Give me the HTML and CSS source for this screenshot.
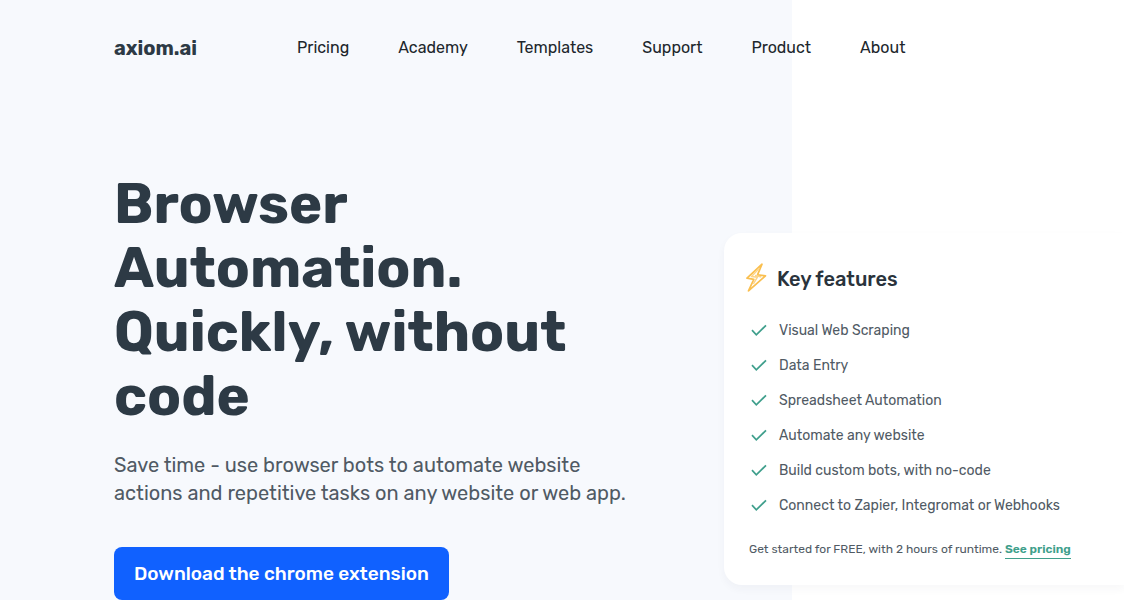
FILE: index.html
```html
<!DOCTYPE html>
<html lang="en">
<head>
<meta charset="utf-8">
<meta name="viewport" content="width=device-width, initial-scale=1">
<title>axiom.ai</title>
<link rel="stylesheet" href="styles.css">
</head>
<body>
<svg class="sprite" aria-hidden="true">
  <symbol id="check" viewBox="0 0 16 14"><path d="M1 6.2 L5.3 10.8 L15 1.3" fill="none" stroke="currentColor" stroke-width="1.7"/></symbol>
</svg>
<header class="header">
  <a class="logo" href="#">axiom.ai</a>
  <nav class="nav">
    <a href="#">Pricing</a>
    <a href="#">Academy</a>
    <a href="#">Templates</a>
    <a href="#">Support</a>
    <a href="#">Product</a>
    <a href="#">About</a>
  </nav>
</header>
<main class="hero">
  <section class="intro">
    <h1 class="title">Browser Automation. Quickly, without code</h1>
    <p class="lead">Save time - use browser bots to automate website actions and repetitive tasks on any website or web app.</p>
    <button class="cta" type="button">Download the chrome extension</button>
  </section>
  <aside class="card">
    <h2 class="card-title">
      <svg class="bolt" viewBox="0 0 22 32" aria-hidden="true"><path d="M17 1.2 L2 15.2 L8.8 16.3 L3.5 27.8 L20.5 12.8 L12.5 11.8 Z" fill="none" stroke="#fabf4f" stroke-width="1.7" stroke-linejoin="round"/><path d="M14 5.5 L6.5 13.4 L12.3 14.3 L8.3 20.8 M10 12.6 L16.3 14" fill="none" stroke="#fcd489" stroke-width="1.5" stroke-linejoin="round"/></svg>
      Key features
    </h2>
    <ul class="features">
      <li><svg class="check"><use href="#check"/></svg>Visual Web Scraping</li>
      <li><svg class="check"><use href="#check"/></svg>Data Entry</li>
      <li><svg class="check"><use href="#check"/></svg>Spreadsheet Automation</li>
      <li><svg class="check"><use href="#check"/></svg>Automate any website</li>
      <li><svg class="check"><use href="#check"/></svg>Build custom bots, with no-code</li>
      <li><svg class="check"><use href="#check"/></svg>Connect to Zapier, Integromat or Webhooks</li>
    </ul>
    <p class="note">Get started for FREE, with 2 hours of runtime. <a href="#">See pricing</a></p>
  </aside>
</main>
</body>
</html>
```
FILE: styles.css
```css
* { box-sizing: border-box; }
body {
  margin: 0;
  min-height: 100vh;
  overflow-x: hidden;
  font-family: Rubik, Roboto, sans-serif;
  color: #505a64;
  background: linear-gradient(90deg, #f7f9fd 70.45%, #fff 70.45%);
}
.sprite { display: none; }
h1, h2, p, ul { margin: 0; padding: 0; }
a { color: inherit; text-decoration: none; }
.header {
  display: flex;
  align-items: center;
  gap: 100px;
  height: 95px;
  padding-left: 114px;
}
.logo { font-size: 20px; font-weight: 700; color: #2d3a45; }
.nav { display: flex; gap: 49px; font-size: 16px; color: #20262b; }
.hero {
  display: grid;
  grid-template-columns: minmax(0, 610fr) minmax(0, 400fr);
  align-items: start;
  padding: 77px 0 0 114px;
}
.intro { padding-right: 80px; }
.title {
  max-width: 500px;
  font-size: 56px;
  line-height: 64px;
  font-weight: 700;
  color: #2d3a45;
}
.lead { margin-top: 23px; font-size: 20px; line-height: 28px; }
.cta {
  margin-top: 40px;
  height: 53px;
  padding: 0 20px;
  border: 0;
  border-radius: 8px;
  background: #1061ff;
  color: #fff;
  font: inherit;
  font-size: 19px;
  font-weight: 500;
}
.card {
  margin-top: 61px;
  padding: 30px 24px 26px 21px;
  border-radius: 18px 0 0 18px;
  background: #fff;
  box-shadow: 0 4px 8px rgba(45, 58, 69, 0.04);
}
.card-title {
  display: flex;
  align-items: center;
  gap: 10px;
  height: 32px;
  font-size: 20px;
  font-weight: 500;
  color: #2a333c;
}
.bolt { width: 22px; height: 32px; }
.features { margin: 18px 0 16px; list-style: none; font-size: 14px; }
.features li { display: flex; align-items: center; gap: 12px; height: 35px; padding-left: 6px; }
.check { width: 16px; height: 14px; color: #3f9f8c; }
.note { padding-left: 4px; font-size: 12px; line-height: 20px; }
.note a { color: #3f9f8c; font-weight: 600; border-bottom: 1px solid; padding-bottom: 2px; }
```
